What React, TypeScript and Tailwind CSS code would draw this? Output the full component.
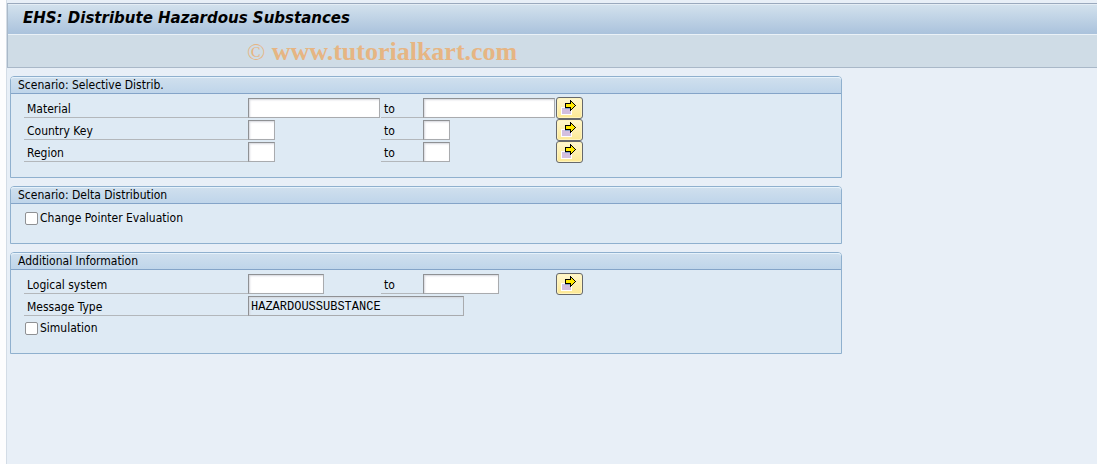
import type { ReactNode } from 'react';
import clsx from 'clsx';

interface PanelProps {
  title: string;
  children: ReactNode;
}

const Panel = ({ title, children }: PanelProps) => (
  <section className="w-full max-w-[832px] rounded-t-[4px] border border-[#8fb0ce] bg-[#deeaf4]">
    <h2 className="h-[17px] rounded-t-[3px] border-b border-[#84a4c8] bg-linear-to-b from-[#d0e0ee] to-[#bfd5ea] pl-[7px] leading-4 shadow-[inset_0_1px_0_#e6f2fb]">
      {title}
    </h2>
    <div className="pt-[3px] pb-3.5 pl-[13px]">{children}</div>
  </section>
);

const fieldClass =
  'block h-5 border border-[#a9abae] border-t-[#8f9194] border-l-[#8f9194] px-0.5 pt-0.5 font-["Liberation_Mono",monospace] text-[12px] shadow-[inset_1px_1px_2px_#d4d6dc] outline-none';

const SelectionButton = ({ label }: { label: string }) => (
  <button
    type="button"
    aria-label={`Multiple selection for ${label}`}
    className="flex h-[22px] w-[27px] items-center justify-center rounded-[3px] border border-[#66686c] bg-linear-to-b from-[#fff7cf] to-[#fde892] shadow-[inset_0_0_0_1px_#fff4bd]"
  >
    <svg width="17" height="16" viewBox="0 0 17 16" shapeRendering="crispEdges">
      <path d="M0 7h11v8H0z" fill="#fff" />
      <path d="M1 8h9v6H1z" fill="#d3bfdf" />
      <path d="M4 8h6v1H4z" fill="#86a0c8" />
      <path
        d="M4 3h5V0h1v1h1v1h1v1h1v1h1v1h1v1h-1v1h-1v1h-1v1h-1v1h-1v1H9V8H4z"
        fill="#000"
      />
      <path d="M5 4h5V2h1v1h1v1h1v1h1v1h-1v1h-1v1h-1v1h-1V7H5z" fill="#ffe900" />
    </svg>
  </button>
);

interface RangeRowProps {
  id: string;
  label: string;
  width: string;
}

const RangeRow = ({ id, label, width }: RangeRowProps) => (
  <div className="grid h-[22px] grid-cols-[224px_133px_42px_133px_27px] items-center">
    <label htmlFor={`${id}-from`} className="h-5 border-b border-[#b3b7bb] pl-[3px] leading-[22px]">
      {label}
    </label>
    <input id={`${id}-from`} type="text" className={clsx(fieldClass, 'bg-white', width)} />
    <label htmlFor={`${id}-to`} className="h-5 border-b border-[#b3b7bb] pl-[3px] leading-[22px]">
      to
    </label>
    <input id={`${id}-to`} type="text" className={clsx(fieldClass, 'bg-white', width)} />
    <SelectionButton label={label} />
  </div>
);

const CheckRow = ({ label }: { label: string }) => (
  <label className="flex h-[22px] items-center gap-0.5 pl-px leading-[22px]">
    <input
      type="checkbox"
      className="size-[13px] appearance-none rounded-[2px] border border-[#8f9194] bg-white checked:bg-[#5c86b4]"
    />
    {label}
  </label>
);

const App = () => (
  <div className="min-h-screen bg-[#fdfdfe] pl-1.5 font-['DejaVu_Sans_Condensed','DejaVu_Sans',sans-serif] text-[12px] text-black">
    <div className="min-h-screen border-l border-[#d3dce6] bg-[#e8eff7] pt-[3px]">
      <header className="border-y border-l border-t-[#9aa9bd] border-b-[#a9b8c8] border-l-[#a9b8c8]">
        <h1 className="h-[30px] border-t border-[#e4edf5] bg-linear-to-b from-[#d2e1ed] to-[#aac2dc] pl-[15px] font-['DejaVu_Sans',sans-serif] text-[15px] leading-[26px] font-bold italic">
          EHS: Distribute Hazardous Substances
        </h1>
        <div className="h-[33px] border-t border-[#eaf1f7] bg-[#cfdce6] pl-[239px] font-['Liberation_Serif',serif] text-[26px] leading-[34px] font-bold text-[#e6b583]">
          <span className="text-[24px] font-normal">©</span> www.tutorialkart.com
        </div>
      </header>
      <main className="flex flex-col gap-2 pt-2 pr-3 pl-[3px]">
        <Panel title="Scenario: Selective Distrib.">
          <RangeRow id="material" label="Material" width="w-[132px]" />
          <RangeRow id="country" label="Country Key" width="w-[27px]" />
          <RangeRow id="region" label="Region" width="w-[27px]" />
        </Panel>
        <Panel title="Scenario: Delta Distribution">
          <CheckRow label="Change Pointer Evaluation" />
        </Panel>
        <Panel title="Additional Information">
          <RangeRow id="logical-system" label="Logical system" width="w-[76px]" />
          <div className="flex h-[22px] items-center">
            <label htmlFor="message-type" className="h-5 w-[224px] border-b border-[#b3b7bb] pl-[3px] leading-[22px]">
              Message Type
            </label>
            <input
              id="message-type"
              type="text"
              readOnly
              value="HAZARDOUSSUBSTANCE"
              className={clsx(fieldClass, 'w-[216px] bg-[#deeaf4]')}
            />
          </div>
          <CheckRow label="Simulation" />
        </Panel>
      </main>
    </div>
  </div>
);

export default App;
